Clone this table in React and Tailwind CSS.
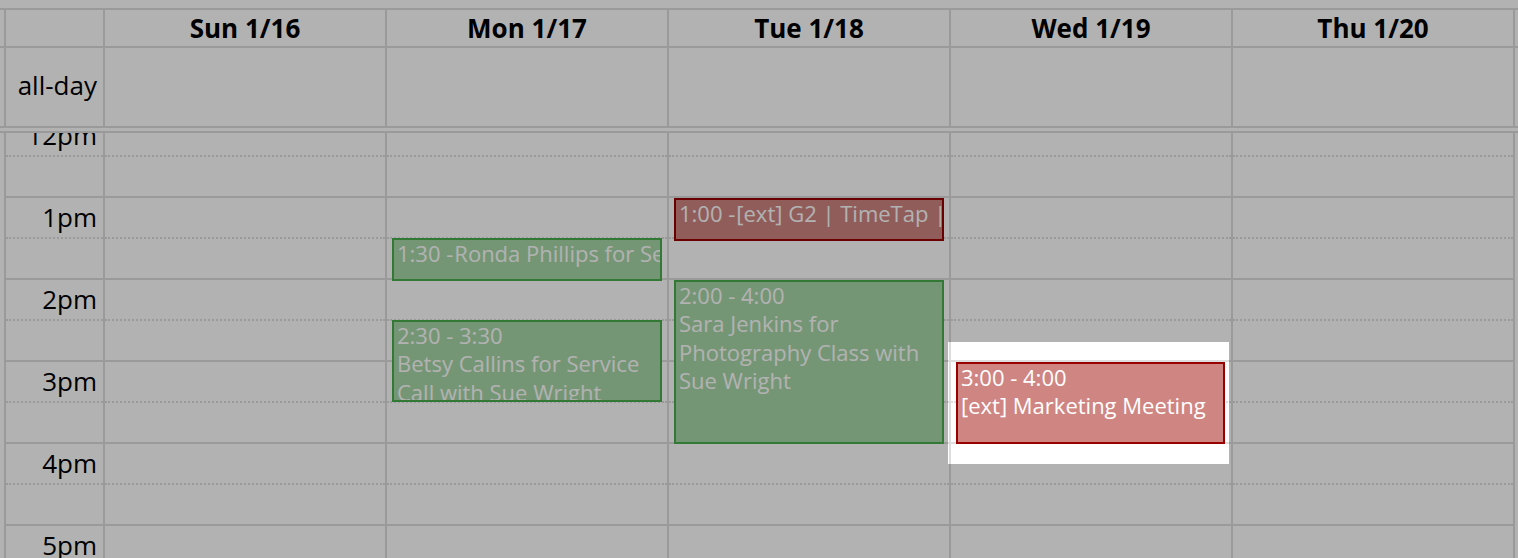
import React from "react";

const days = ["Sun 1/16", "Mon 1/17", "Tue 1/18", "Wed 1/19", "Thu 1/20"];
const hours = ["12pm", "1pm", "2pm", "3pm", "4pm", "5pm"];

// minutes after noon
const events = {
  1: [
    { start: 90, end: 120, time: "1:30 -", title: "Ronda Phillips for Service Call with Sue Wright", kind: "green" },
    { start: 150, end: 210, time: "2:30 - 3:30", title: "Betsy Callins for Service Call with Sue Wright", kind: "green" },
  ],
  2: [
    { start: 60, end: 90, time: "1:00 -", title: "[ext] G2 | TimeTap | Product Demo", kind: "red" },
    { start: 120, end: 240, time: "2:00 - 4:00", title: "Sara Jenkins for Photography Class with Sue Wright", kind: "green" },
  ],
  3: [
    { start: 180, end: 240, time: "3:00 - 4:00", title: "[ext] Marketing Meeting", kind: "red", wide: true },
  ],
};

const kinds = {
  green: "bg-[#a8d7a8] border-[#4aae4e]",
  red: "bg-[#cf8683] border-[#990000]",
};

const Event = ({ ev }) => {
  const half = ev.start % 60 ? 1 : 0;
  const top = Math.round((ev.start * 82) / 60) - half;
  const short = ev.end - ev.start <= 30;
  const height = short ? 43 : Math.round(((ev.end - ev.start) * 82) / 60);
  return (
    <div
      className={`absolute left-[5px] ${ev.wide ? "right-[6px]" : "right-[5px]"} overflow-hidden border-2 px-[3px] text-[22px] leading-[28.4px] text-white ${kinds[ev.kind]}`}
      style={{ top, height }}
    >
      {short ? (
        <div className="-mt-[1px] flex whitespace-nowrap">
          <span>{ev.time}</span>
          <span className="ml-[1px]">{ev.title}</span>
        </div>
      ) : (
        <div className="-mt-[1px]">
          <div>{ev.time}</div>
          <div>{ev.title}</div>
        </div>
      )}
    </div>
  );
};

const Slots = ({ label }) => (
  <div>
    <div className="h-[41px] border-b-2 border-dotted border-[#dddddd]">
      {label && <div className="pr-[6px] pt-[2px] text-right text-[26px] leading-[35px]">{label}</div>}
    </div>
    <div className="h-[41px] border-b-2 border-[#dddddd]" />
  </div>
);

export default function App() {
  return (
    <div className="relative h-[558px] w-[1518px] overflow-hidden bg-white font-['Open_Sans',sans-serif] text-black">
      <div className="pt-[8px]">
        {/* day header */}
        <div className="flex h-[40px] border-y-2 border-[#dddddd]">
          <div className="w-[4px] shrink-0" />
          <div className="w-[101px] shrink-0 border-x-2 border-[#dddddd]" />
          {days.map((d) => (
            <div
              key={d}
              className="flex w-[282px] shrink-0 items-center justify-center border-r-2 border-[#dddddd] text-[26px] font-bold leading-[35px]"
            >
              {d}
            </div>
          ))}
        </div>

        {/* all-day row */}
        <div className="flex h-[80px] border-b-2 border-[#dddddd]">
          <div className="w-[4px] shrink-0" />
          <div className="w-[101px] shrink-0 border-x-2 border-[#dddddd] pr-[6px] pt-[20px] text-right text-[26px] leading-[35px]">
            all-day
          </div>
          {days.map((d) => (
            <div key={d} className="w-[282px] shrink-0 border-r-2 border-[#dddddd]" />
          ))}
        </div>

        <div className="h-[5px] border-b-2 border-[#dddddd]" />

        {/* time grid, scrolled to noon */}
        <div className="h-[425px] overflow-hidden">
          <div className="-mt-[17px] flex">
            <div className="w-[4px] shrink-0" />
            <div className="w-[101px] shrink-0 border-x-2 border-[#dddddd]">
              {hours.map((h) => (
                <Slots key={h} label={h} />
              ))}
            </div>
            {days.map((d, i) => (
              <div key={d} className="relative w-[282px] shrink-0 border-r-2 border-[#dddddd]">
                {hours.map((h) => (
                  <Slots key={h} />
                ))}
                {(events[i] || []).map((ev) => (
                  <Event key={ev.time} ev={ev} />
                ))}
              </div>
            ))}
          </div>
        </div>
      </div>

      {/* tour spotlight */}
      <div className="pointer-events-none absolute left-[948px] top-[342px] h-[122px] w-[281px] shadow-[0_0_0_3000px_rgba(0,0,0,0.3)]" />
    </div>
  );
}
